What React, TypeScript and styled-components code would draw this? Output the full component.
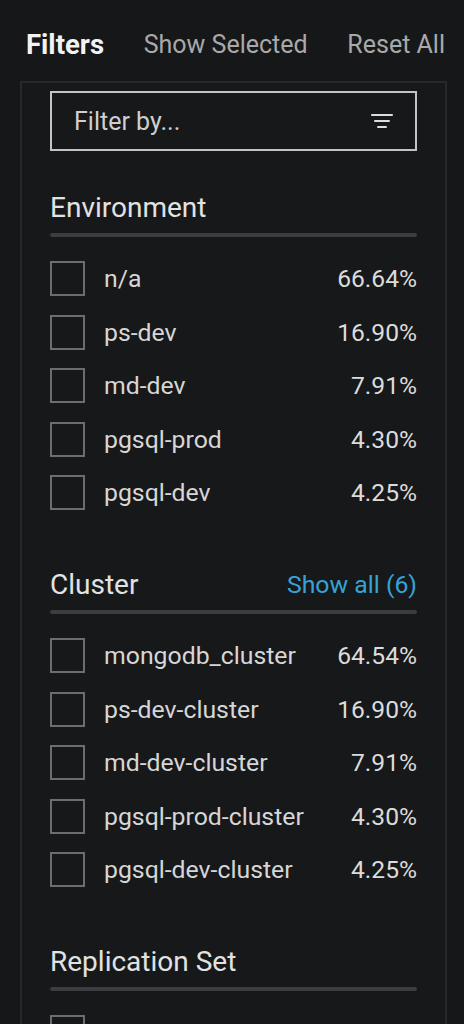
import React from 'react'
import styled, { createGlobalStyle } from 'styled-components'

const GlobalStyle = createGlobalStyle`
  html, body {
    margin: 0;
    padding: 0;
    background: #161719;
  }
  body {
    font-family: Roboto, "Liberation Sans", Arial, sans-serif;
    overflow: hidden;
  }
`

const Page = styled.div`
  width: 464px;
  height: 1024px;
  overflow: hidden;
  background: #161719;
`

const TopBar = styled.div`
  display: flex;
  align-items: center;
  justify-content: space-between;
  height: 32px;
  padding: 29px 19px 0 26px;
  margin-bottom: 20px;
`

const Title = styled.div`
  font-size: 27.5px;
  font-weight: 700;
  color: #f2f2f2;
  line-height: 32px;
`

const TopAction = styled.div`
  font-size: 25px;
  color: #a9a9a9;
  line-height: 32px;
`

const Panel = styled.div`
  margin-left: 20px;
  min-height: 1000px;
  border: 2px solid #26282b;
  border-bottom: none;
  background: #17181a;
  padding: 8px 28px 0 28px;
  box-sizing: content-box;
  width: 367px;
`

const SearchBox = styled.div`
  display: flex;
  align-items: center;
  justify-content: space-between;
  height: 56px;
  border: 2px solid #c4c4c4;
  padding: 0 22px;
`

const SearchText = styled.div`
  font-size: 25px;
  color: #cfcfcf;
`

const Section = styled.div<{ $first?: boolean }>`
  margin-top: ${({ $first }) => ($first ? '41px' : '59px')};
`

const SectionHead = styled.div`
  display: flex;
  align-items: center;
  justify-content: space-between;
  height: 32px;
`

const SectionTitle = styled.div`
  font-size: 28px;
  color: #e2e2e2;
  line-height: 32px;
`

const ShowAll = styled.div`
  font-size: 24.8px;
  color: #35a3d8;
  line-height: 32px;
`

const Divider = styled.div`
  height: 4px;
  border-radius: 2px;
  background: #3b3d40;
  margin: 9px 0 24px;
`

const Rows = styled.div`
  display: flex;
  flex-direction: column;
  gap: 18.5px;
`

const Row = styled.div`
  display: flex;
  align-items: center;
  height: 35px;
`

const Box = styled.div`
  width: 31px;
  height: 31px;
  border: 2px solid #6d6d6d;
  flex-shrink: 0;
`

const Label = styled.div`
  flex: 1;
  margin-left: 19px;
  font-size: 24.8px;
  color: #d6d6d6;
`

const Percent = styled.div`
  font-size: 24.6px;
  color: #dcdcdc;
`

const FilterIcon = () => (
  <svg width="22" height="16" viewBox="0 0 22 16">
    <rect x="0" y="1" width="22" height="2" rx="1" fill="#dedede" />
    <rect x="3" y="7" width="16" height="2" rx="1" fill="#dedede" />
    <rect x="6" y="13" width="10" height="2" rx="1" fill="#dedede" />
  </svg>
)

type Item = { name: string; pct: string }

const sections: { title: string; showAll?: string; items: Item[] }[] = [
  {
    title: 'Environment',
    items: [
      { name: 'n/a', pct: '66.64%' },
      { name: 'ps-dev', pct: '16.90%' },
      { name: 'md-dev', pct: '7.91%' },
      { name: 'pgsql-prod', pct: '4.30%' },
      { name: 'pgsql-dev', pct: '4.25%' },
    ],
  },
  {
    title: 'Cluster',
    showAll: 'Show all (6)',
    items: [
      { name: 'mongodb_cluster', pct: '64.54%' },
      { name: 'ps-dev-cluster', pct: '16.90%' },
      { name: 'md-dev-cluster', pct: '7.91%' },
      { name: 'pgsql-prod-cluster', pct: '4.30%' },
      { name: 'pgsql-dev-cluster', pct: '4.25%' },
    ],
  },
  {
    title: 'Replication Set',
    items: [
      { name: 'rs1', pct: '66.64%' },
      { name: 'rs2', pct: '16.90%' },
    ],
  },
]

export default function App() {
  return (
    <Page>
      <GlobalStyle />
      <TopBar>
        <Title>Filters</Title>
        <TopAction>Show Selected</TopAction>
        <TopAction>Reset All</TopAction>
      </TopBar>
      <Panel>
        <SearchBox>
          <SearchText>Filter by...</SearchText>
          <FilterIcon />
        </SearchBox>
        {sections.map((s, i) => (
          <Section key={s.title} $first={i === 0}>
            <SectionHead>
              <SectionTitle>{s.title}</SectionTitle>
              {s.showAll && <ShowAll>{s.showAll}</ShowAll>}
            </SectionHead>
            <Divider />
            <Rows>
              {s.items.map((it) => (
                <Row key={it.name}>
                  <Box />
                  <Label>{it.name}</Label>
                  <Percent>{it.pct}</Percent>
                </Row>
              ))}
            </Rows>
          </Section>
        ))}
      </Panel>
    </Page>
  )
}
